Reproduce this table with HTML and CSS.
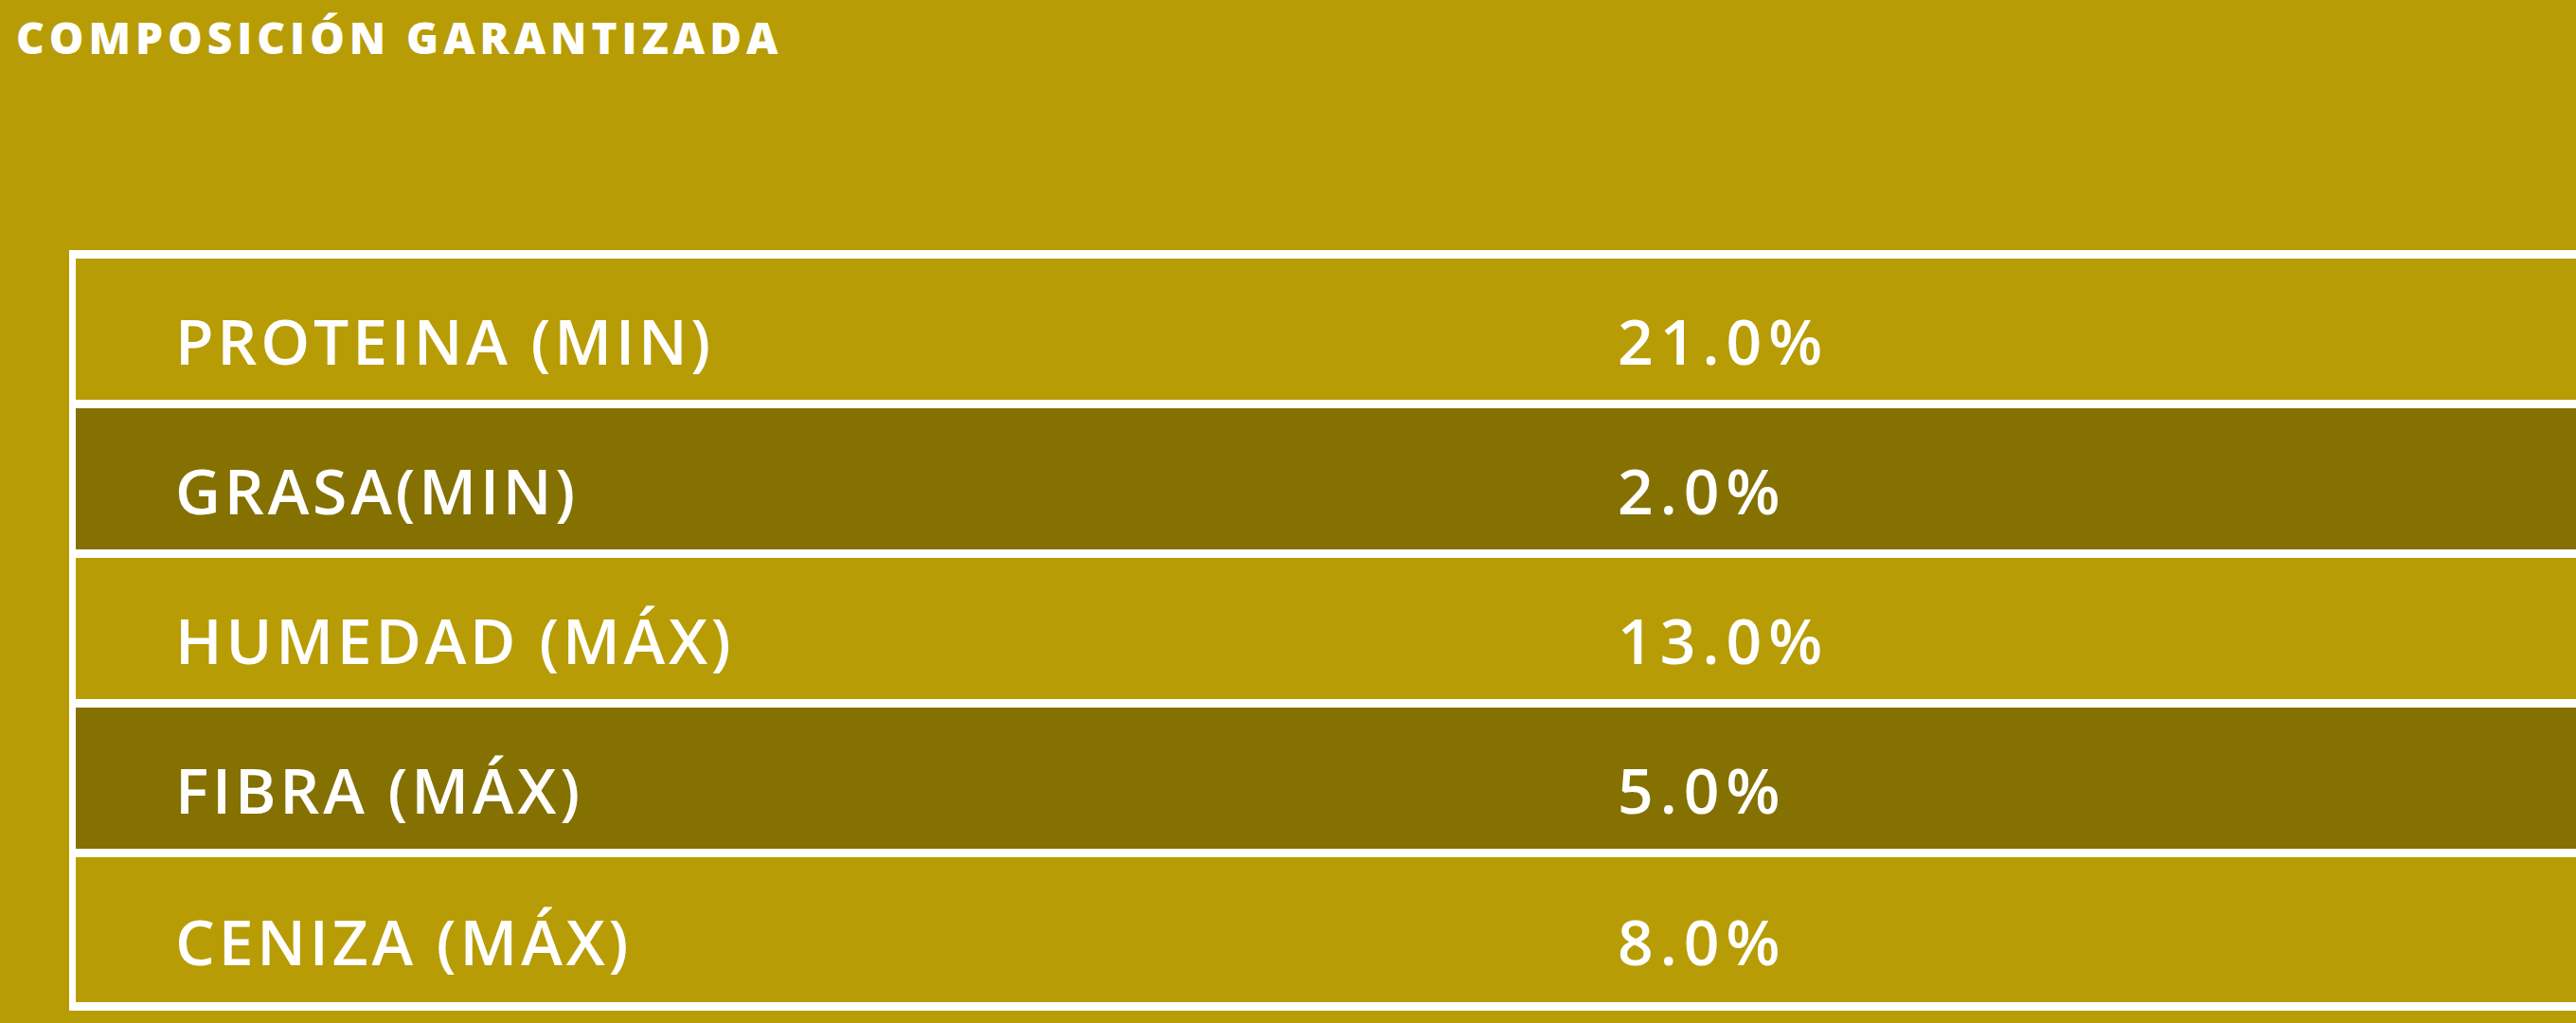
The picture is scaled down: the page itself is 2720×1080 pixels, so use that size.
FILE: index.html
```html
<!DOCTYPE html>
<html lang="es">
<head>
<meta charset="utf-8">
<title>Composición garantizada</title>
<link rel="stylesheet" href="styles.css">
</head>
<body>
<section class="composition">
  <h2 class="composition-title">COMPOSICIÓN GARANTIZADA</h2>
  <div class="composition-table">
    <div class="row row-light"><div class="cell cell-label">PROTEINA (MIN)</div><div class="cell cell-value">21.0%</div></div>
    <div class="row row-dark"><div class="cell cell-label">GRASA(MIN)</div><div class="cell cell-value">2.0%</div></div>
    <div class="row row-light"><div class="cell cell-label">HUMEDAD (MÁX)</div><div class="cell cell-value">13.0%</div></div>
    <div class="row row-dark"><div class="cell cell-label">FIBRA (MÁX)</div><div class="cell cell-value">5.0%</div></div>
    <div class="row row-light row-last"><div class="cell cell-label">CENIZA (MÁX)</div><div class="cell cell-value">8.0%</div></div>
  </div>
</section>
</body>
</html>
```
FILE: styles.css
```css
html, body {
  margin: 0;
  padding: 0;
}
body {
  background: #b89c06;
  width: 2720px;
  height: 1080px;
  overflow: hidden;
  font-family: "Open Sans", "Liberation Sans", sans-serif;
  color: #ffffff;
}
.composition-title {
  margin: 0;
  padding: 12px 0 0 17px;
  font-family: "Open Sans", sans-serif;
  font-weight: 800;
  font-size: 46px;
  line-height: 54px;
  letter-spacing: 5px;
}
.composition-table {
  margin: 198px 0 0 73px;
  width: 2800px;
  background: #ffffff;
  padding: 9px 0 9px 7px;
  display: flex;
  flex-direction: column;
  gap: 9px;
}
.row {
  display: grid;
  grid-template-columns: 1521px 1fr;
  height: 149px;
  align-items: center;
}
.row-last {
  height: 153px;
}
.row-light {
  background: #b89c06;
}
.row-dark {
  background: #857102;
}
.cell {
  padding: 22px 0 0 105px;
  font-size: 66px;
  font-weight: 600;
  line-height: 80px;
  white-space: nowrap;
}
.cell-label {
  letter-spacing: 3.8px;
}
.cell-value {
  padding-left: 107px;
  letter-spacing: 7px;
}
```
